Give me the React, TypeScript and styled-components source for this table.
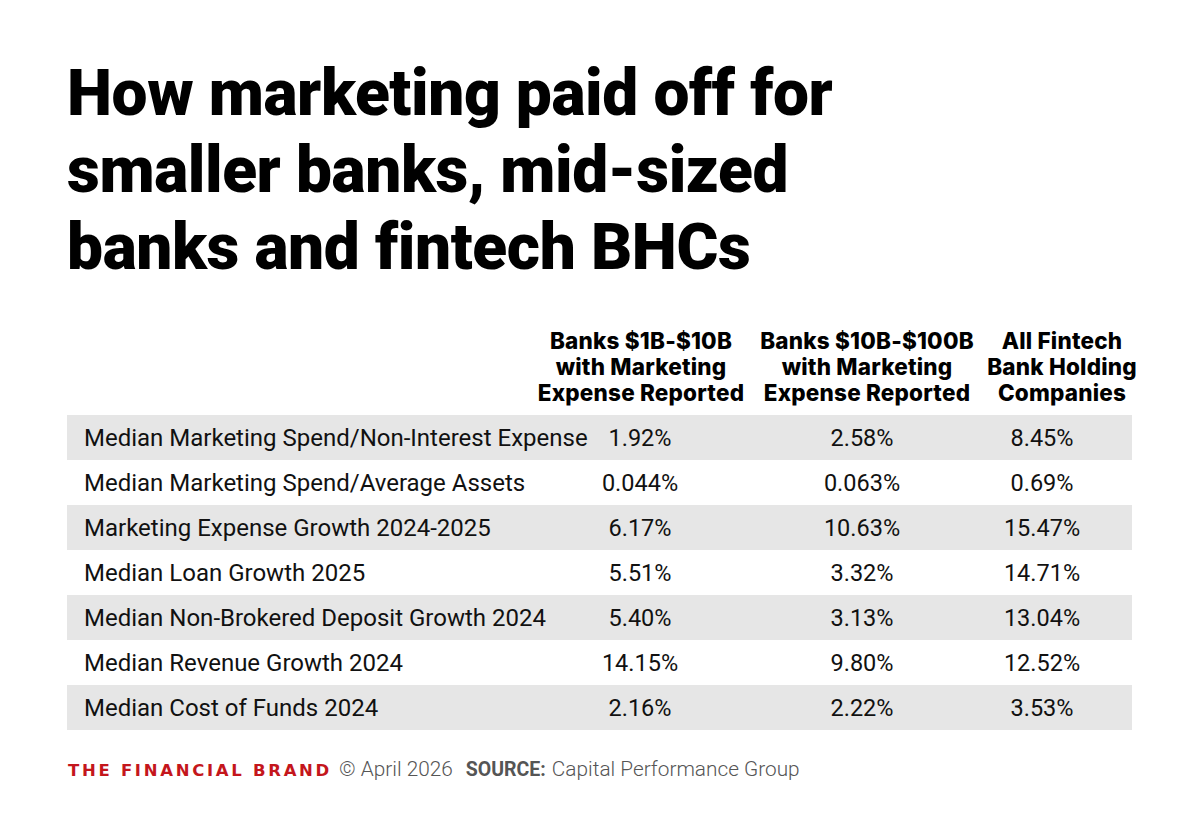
import React from "react";
import styled, { createGlobalStyle } from "styled-components";

const Global = createGlobalStyle`
  html, body { margin: 0; padding: 0; background: #ffffff; }
  body { font-family: Roboto, "Liberation Sans", sans-serif; color: #111; }
`;

const Page = styled.div`
  width: 1200px;
  height: 821px;
  box-sizing: border-box;
  padding: 55px 68px 0 67px;
  display: flex;
  flex-direction: column;
  background: #fff;
`;

const Title = styled.h1`
  margin: 0;
  font-family: Roboto, "Liberation Sans", sans-serif;
  font-weight: 900;
  font-size: 64px;
  line-height: 77px;
  letter-spacing: -0.4px;
  color: #000;
`;

const HeaderRow = styled.div`
  margin-top: 42px;
  display: grid;
  grid-template-columns: 463px 222px 230px 160px;
  align-items: end;
  padding-bottom: 9px;
`;

const HeaderCell = styled.div`
  font-family: Inter, "Liberation Sans", sans-serif;
  font-weight: 800;
  font-size: 22.5px;
  line-height: 26px;
  letter-spacing: 0.2px;
  text-align: center;
  color: #000;
  white-space: nowrap;
`;

const Body = styled.div`
  display: flex;
  flex-direction: column;
  width: 1065px;
`;

const Row = styled.div<{ $shade: boolean }>`
  display: grid;
  grid-template-columns: 463px 220px 224px 136px 22px;
  height: 45px;
  align-items: center;
  background: ${(p) => (p.$shade ? "#e6e6e6" : "#ffffff")};
`;

const Label = styled.div`
  padding-left: 17px;
  font-size: 24px;
  color: #111;
  white-space: nowrap;
`;

const Value = styled.div`
  font-size: 23.5px;
  text-align: center;
  color: #111;
  white-space: nowrap;
`;

const Footer = styled.div`
  margin-top: 27px;
  display: flex;
  align-items: baseline;
  font-family: Roboto, "Liberation Sans", sans-serif;
  font-size: 20.8px;
  font-weight: 300;
  color: #555;
`;

const Brand = styled.span`
  font-family: "DejaVu Sans", Verdana, sans-serif;
  font-weight: 700;
  font-size: 16.5px;
  letter-spacing: 2.7px;
  color: #c4161c;
  margin-left: 1px;
  margin-right: 7px;
`;

const Stamp = styled.span`
  margin-right: 13px;
`;

const SourceLabel = styled.span`
  font-size: 19.5px;
  font-weight: 700;
  color: #555;
  margin-right: 6px;
`;

const rows: [string, string, string, string][] = [
  ["Median Marketing Spend/Non-Interest Expense", "1.92%", "2.58%", "8.45%"],
  ["Median Marketing Spend/Average Assets", "0.044%", "0.063%", "0.69%"],
  ["Marketing Expense Growth 2024-2025", "6.17%", "10.63%", "15.47%"],
  ["Median Loan Growth 2025", "5.51%", "3.32%", "14.71%"],
  ["Median Non-Brokered Deposit Growth 2024", "5.40%", "3.13%", "13.04%"],
  ["Median Revenue Growth 2024", "14.15%", "9.80%", "12.52%"],
  ["Median Cost of Funds 2024", "2.16%", "2.22%", "3.53%"],
];

export default function App() {
  return (
    <>
      <Global />
      <Page>
        <Title>
          How marketing paid off for
          <br />
          smaller banks, mid-sized
          <br />
          banks and fintech BHCs
        </Title>
        <HeaderRow>
          <div />
          <HeaderCell>
            Banks $1B-$10B
            <br />
            with Marketing
            <br />
            Expense Reported
          </HeaderCell>
          <HeaderCell>
            Banks $10B-$100B
            <br />
            with Marketing
            <br />
            Expense Reported
          </HeaderCell>
          <HeaderCell>
            All Fintech
            <br />
            Bank Holding
            <br />
            Companies
          </HeaderCell>
        </HeaderRow>
        <Body>
          {rows.map((r, i) => (
            <Row key={r[0]} $shade={i % 2 === 0}>
              <Label>{r[0]}</Label>
              <Value>{r[1]}</Value>
              <Value>{r[2]}</Value>
              <Value>{r[3]}</Value>
              <div />
            </Row>
          ))}
        </Body>
        <Footer>
          <Brand>THE FINANCIAL BRAND</Brand>
          <Stamp>© April 2026</Stamp>
          <SourceLabel>SOURCE:</SourceLabel>
          <span>Capital Performance Group</span>
        </Footer>
      </Page>
    </>
  );
}
